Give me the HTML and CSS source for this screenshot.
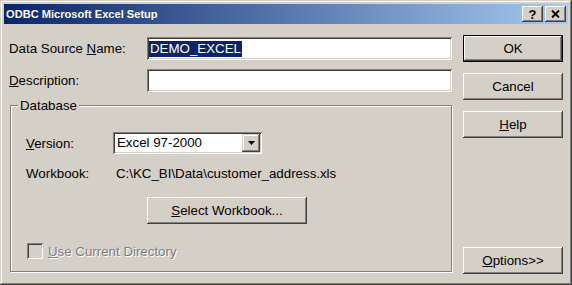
FILE: index.html
```html
<!DOCTYPE html>
<html lang="en">
<head>
    <meta charset="UTF-8">
    <title>ODBC Microsoft Excel Setup</title>
    <link rel="stylesheet" href="styles.css">
</head>
<body>
    <div class="window">
        <div class="titlebar">
            <span class="title">ODBC Microsoft Excel Setup</span>
            <div class="caption-btns">
                <button class="cap-btn">?</button>
                <button class="cap-btn">
                    <svg width="9" height="8" viewBox="0 0 9 8">
                        <path d="M1 0.5 L8 7.5 M8 0.5 L1 7.5" stroke="#000" stroke-width="2" fill="none"/>
                    </svg>
                </button>
            </div>
        </div>

        <div class="dialog">
            <div class="main">
                <div class="field-row">
                    <span class="label">Data Source <u>N</u>ame:</span>
                    <div class="edit"><span class="sel">DEMO_EXCEL</span></div>
                </div>
                <div class="field-row second">
                    <span class="label"><u>D</u>escription:</span>
                    <div class="edit"></div>
                </div>

                <div class="group">
                    <span class="group-title">Database</span>

                    <div class="group-row">
                        <span class="glabel"><u>V</u>ersion:</span>
                        <div class="combo">
                            <span class="combo-text">Excel 97-2000</span>
                            <span class="combo-btn">
                                <svg width="7" height="4" viewBox="0 0 7 4">
                                    <path d="M0 0 H7 L3.5 4 Z" fill="#000"/>
                                </svg>
                            </span>
                        </div>
                    </div>

                    <div class="group-row workbook">
                        <span class="glabel wide">Workbook:</span>
                        <span class="path">C:\KC_BI\Data\customer_address.xls</span>
                    </div>

                    <button class="btn select-wb"><u>S</u>elect Workbook...</button>

                    <div class="check-row">
                        <span class="checkbox"></span>
                        <span class="disabled"><u>U</u>se Current Directory</span>
                    </div>
                </div>
            </div>

            <div class="side">
                <button class="btn default">OK</button>
                <button class="btn">Cancel</button>
                <button class="btn"><u>H</u>elp</button>
                <button class="btn options"><u>O</u>ptions&gt;&gt;</button>
            </div>
        </div>
    </div>
</body>
</html>
```

FILE: styles.css
```css
body {
    margin: 0;
    background: #d4d0c8;
    font-family: "Liberation Sans", Arial, sans-serif;
    font-size: 13.3px;
    color: #000;
}

.window {
    width: 572px;
    height: 285px;
    box-sizing: border-box;
    padding: 4px;
    background: #d4d0c8;
    box-shadow: inset -1px -1px #404040, inset 1px 1px #d4d0c8,
                inset -2px -2px #808080, inset 2px 2px #fff;
}

/* title bar */
.titlebar {
    height: 20px;
    display: flex;
    align-items: center;
    justify-content: space-between;
    padding: 0 2px;
    background: linear-gradient(to right, #0a246a, #a6caf0);
}

.title {
    color: #fff;
    font-weight: bold;
    font-size: 11.1px;
}

.caption-btns {
    display: flex;
    gap: 2px;
}

.cap-btn {
    width: 21px;
    height: 16px;
    padding: 0;
    border: none;
    background: #d4d0c8;
    display: flex;
    align-items: center;
    justify-content: center;
    font-family: "Liberation Sans", Arial, sans-serif;
    font-weight: bold;
    font-size: 13px;
    color: #000;
    box-shadow: inset -1px -1px #404040, inset 1px 1px #fff,
                inset -2px -2px #808080, inset 2px 2px #d4d0c8;
}

/* body of the dialog */
.dialog {
    display: flex;
    gap: 11px;
    height: 257px;
    padding: 0 5px;
}

.main {
    width: 443px;
    padding-top: 13px;
    display: flex;
    flex-direction: column;
}

.field-row {
    display: flex;
    align-items: center;
    height: 23px;
}

.field-row.second {
    margin-top: 9px;
}

.label {
    width: 138px;
}

.edit {
    width: 305px;
    height: 23px;
    box-sizing: border-box;
    padding: 0 2px;
    display: flex;
    align-items: center;
    background: #fff;
    box-shadow: inset 1px 1px #808080, inset -1px -1px #fff,
                inset 2px 2px #404040, inset -2px -2px #d4d0c8;
}

.sel {
    background: #0a246a;
    color: #fff;
    line-height: 16px;
    padding: 0 1px;
}

/* Database group */
.group {
    position: relative;
    margin: 13px 0 0 1px;
    width: 442px;
    height: 167px;
    box-sizing: border-box;
    padding: 26px 0 0 15px;
    border: 1px solid #808080;
    box-shadow: 1px 1px 0 #fff, inset 1px 1px 0 #fff;
}

.group-title {
    position: absolute;
    top: -8px;
    left: 7px;
    padding: 0 2px;
    line-height: 16px;
    background: #d4d0c8;
}

.group-row {
    display: flex;
    align-items: center;
    height: 22px;
}

.group-row.workbook {
    height: 16px;
    margin-top: 11px;
}

.glabel {
    width: 87px;
}

.glabel.wide {
    width: 90px;
}

.combo {
    width: 149px;
    height: 22px;
    box-sizing: border-box;
    padding: 2px;
    display: flex;
    background: #fff;
    box-shadow: inset 1px 1px #808080, inset -1px -1px #fff,
                inset 2px 2px #404040, inset -2px -2px #d4d0c8;
}

.combo-text {
    flex: 1;
    line-height: 18px;
    padding-left: 2px;
}

.combo-btn {
    width: 18px;
    height: 18px;
    display: flex;
    align-items: center;
    justify-content: center;
    background: #d4d0c8;
    box-shadow: inset -1px -1px #404040, inset 1px 1px #d4d0c8,
                inset -2px -2px #808080, inset 2px 2px #fff;
}

.check-row {
    display: flex;
    align-items: center;
    margin: 19px 0 0 1px;
    height: 16px;
    gap: 5px;
}

.checkbox {
    width: 16px;
    height: 16px;
    box-sizing: border-box;
    background: #d4d0c8;
    box-shadow: inset 1px 1px #808080, inset -1px -1px #fff,
                inset 2px 2px #404040, inset -2px -2px #d4d0c8;
}

.disabled {
    color: #808080;
    text-shadow: 1px 1px 0 #fff;
}

/* push buttons */
.btn {
    width: 100px;
    height: 27px;
    padding: 0;
    border: none;
    background: #d4d0c8;
    font-family: "Liberation Sans", Arial, sans-serif;
    font-size: 13.3px;
    color: #000;
    box-shadow: inset -1px -1px #404040, inset 1px 1px #fff,
                inset -2px -2px #808080, inset 2px 2px #d4d0c8;
}

.btn.default {
    border: 1px solid #000;
    box-shadow: inset -1px -1px #404040, inset 1px 1px #fff,
                inset -2px -2px #808080;
}

.select-wb {
    width: 160px;
    margin: 16px 0 0 121px;
}

.side {
    width: 100px;
    padding: 11px 0 7px;
    display: flex;
    flex-direction: column;
    gap: 11px;
}

.options {
    margin-top: auto;
}
```
